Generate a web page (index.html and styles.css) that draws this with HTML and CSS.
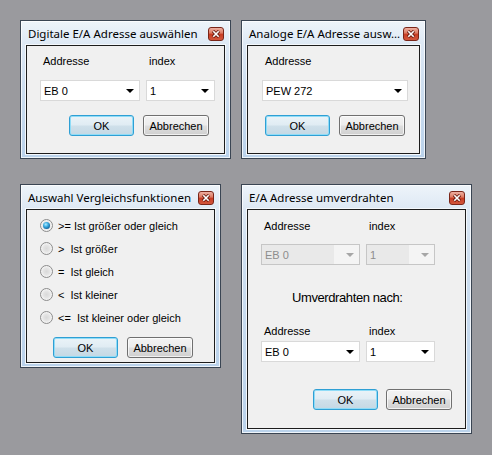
FILE: index.html
```html
<!DOCTYPE html>
<html>
<head>
<meta charset="utf-8">
<link rel="stylesheet" href="styles.css">
</head>
<body>
<div class="desk">

  <div class="win w1">
    <div class="tb"><span class="ttl">Digitale E/A Adresse auswählen</span><span class="x"><svg width="10" height="8" viewBox="0 0 10 8"><path d="M2 1 L8 7 M8 1 L2 7" stroke="#6a1d12" stroke-width="3.2"/><path d="M2.3 1.3 L7.7 6.7 M7.7 1.3 L2.3 6.7" stroke="#fff" stroke-width="1.6"/></svg></span></div>
    <div class="client c1">
      <div class="grid g1">
        <span class="lbl">Addresse</span><span class="lbl">index</span>
        <div class="combo"><span class="val">EB 0</span><span class="arr"></span></div>
        <div class="combo"><span class="val">1</span><span class="arr"></span></div>
      </div>
      <div class="btns b1"><button class="btn def">OK</button><button class="btn">Abbrechen</button></div>
    </div>
  </div>

  <div class="win w2">
    <div class="tb"><span class="ttl">Analoge E/A Adresse ausw...</span><span class="x"><svg width="10" height="8" viewBox="0 0 10 8"><path d="M2 1 L8 7 M8 1 L2 7" stroke="#6a1d12" stroke-width="3.2"/><path d="M2.3 1.3 L7.7 6.7 M7.7 1.3 L2.3 6.7" stroke="#fff" stroke-width="1.6"/></svg></span></div>
    <div class="client c2">
      <div class="grid g2">
        <span class="lbl">Addresse</span>
        <div class="combo"><span class="val">PEW 272</span><span class="arr"></span></div>
      </div>
      <div class="btns b2"><button class="btn def">OK</button><button class="btn">Abbrechen</button></div>
    </div>
  </div>

  <div class="win w3">
    <div class="tb"><span class="ttl">Auswahl Vergleichsfunktionen</span><span class="x"><svg width="10" height="8" viewBox="0 0 10 8"><path d="M2 1 L8 7 M8 1 L2 7" stroke="#6a1d12" stroke-width="3.2"/><path d="M2.3 1.3 L7.7 6.7 M7.7 1.3 L2.3 6.7" stroke="#fff" stroke-width="1.6"/></svg></span></div>
    <div class="client c3">
      <div class="radio"><span class="rb on"></span><span class="rt">&gt;= Ist größer oder gleich</span></div>
      <div class="radio"><span class="rb"></span><span class="rt">&gt;  Ist größer</span></div>
      <div class="radio"><span class="rb"></span><span class="rt">=  Ist gleich</span></div>
      <div class="radio"><span class="rb"></span><span class="rt">&lt;  Ist kleiner</span></div>
      <div class="radio"><span class="rb"></span><span class="rt">&lt;=  Ist kleiner oder gleich</span></div>
      <div class="btns b3"><button class="btn def">OK</button><button class="btn">Abbrechen</button></div>
    </div>
  </div>

  <div class="win w4">
    <div class="tb"><span class="ttl">E/A Adresse umverdrahten</span><span class="x"><svg width="10" height="8" viewBox="0 0 10 8"><path d="M2 1 L8 7 M8 1 L2 7" stroke="#6a1d12" stroke-width="3.2"/><path d="M2.3 1.3 L7.7 6.7 M7.7 1.3 L2.3 6.7" stroke="#fff" stroke-width="1.6"/></svg></span></div>
    <div class="client c4">
      <div class="grid g4 top">
        <span class="lbl">Addresse</span><span class="lbl">index</span>
        <div class="combo dis"><span class="val">EB 0</span><span class="arr"></span></div>
        <div class="combo dis"><span class="val">1</span><span class="arr"></span></div>
      </div>
      <div class="big">Umverdrahten nach:</div>
      <div class="grid g4 bottom">
        <span class="lbl">Addresse</span><span class="lbl">index</span>
        <div class="combo"><span class="val">EB 0</span><span class="arr"></span></div>
        <div class="combo"><span class="val">1</span><span class="arr"></span></div>
      </div>
      <div class="btns b4"><button class="btn def">OK</button><button class="btn">Abbrechen</button></div>
    </div>
  </div>

</div>
</body>
</html>
```

FILE: styles.css
```css
html, body {
  margin: 0;
  padding: 0;
}
body {
  background: #9a9a9e;
  font-family: "Liberation Sans", Arial, sans-serif;
  font-size: 11px;
  color: #000;
}
.desk {
  position: relative;
  width: 492px;
  height: 455px;
  overflow: hidden;
}
.win {
  position: absolute;
  box-sizing: border-box;
  border: 1px solid #3a4553;
  padding: 0 5px 4px 5px;
  display: flex;
  flex-direction: column;
  background: linear-gradient(to bottom, #eef4fa 0px, #dde8f4 24px, #cfdff0 60px, #bad2eb 100%);
  box-shadow: inset 0 0 0 1px rgba(255,255,255,0.75);
}
.w1 { left: 20px; top: 20px; width: 211px; height: 139px; }
.w2 { left: 241px; top: 20px; width: 185px; height: 139px; }
.w3 { left: 20px; top: 184px; width: 201px; height: 184px; }
.w4 { left: 241px; top: 184px; width: 231px; height: 250px; }

.tb {
  height: 24px;
  display: flex;
  align-items: flex-start;
  flex: none;
}
.ttl {
  flex: 1;
  padding-left: 2px;
  line-height: 25px;
  font-family: "Noto Sans", "Open Sans", sans-serif;
  font-size: 11.5px;
  white-space: nowrap;
  overflow: hidden;
  color: #000;
}
.x {
  flex: none;
  margin-top: 6px;
  margin-right: 1px;
  width: 16px;
  height: 14px;
  box-sizing: border-box;
  border: 1px solid #7a2518;
  border-radius: 3px;
  background: linear-gradient(to bottom, #eeb0a2 0%, #dd7a63 42%, #c83d24 52%, #d2563c 100%);
  display: flex;
  align-items: center;
  justify-content: center;
}
.client {
  flex: 1;
  border: 1px solid #1c1c1c;
  background: #f0f0f0;
  box-shadow: 0 0 0 1px #f4f8fc;
}

.grid {
  display: grid;
  column-gap: 6px;
  row-gap: 12px;
}
.lbl {
  padding-left: 3px;
  line-height: 13px;
  white-space: nowrap;
}
.combo {
  height: 21px;
  box-sizing: border-box;
  border: 1px solid #d9d9d9;
  background: #fff;
  display: flex;
  align-items: center;
  justify-content: space-between;
}
.val {
  padding-left: 3px;
  white-space: nowrap;
}
.arr {
  width: 0;
  height: 0;
  border-left: 4px solid transparent;
  border-right: 4px solid transparent;
  border-top: 4px solid #000;
  margin-right: 5px;
}
.combo.dis {
  border-color: #c6c6c6;
  background: linear-gradient(to right, #e9e9e9 0, #e9e9e9 calc(100% - 25px), #f4f4f4 calc(100% - 25px));
  color: #8d8d8d;
}
.combo.dis .arr {
  border-top-color: #a6a6a6;
}

.btns {
  display: flex;
  gap: 9px;
}
.btn {
  height: 21px;
  box-sizing: border-box;
  padding: 0;
  border: 1px solid #707070;
  border-radius: 3px;
  background: linear-gradient(to bottom, #f3f3f3 0%, #ececec 48%, #dedede 52%, #d0d0d0 100%);
  box-shadow: inset 0 0 0 1px rgba(255,255,255,0.7);
  font-family: "Liberation Sans", Arial, sans-serif;
  font-size: 11px;
  color: #000;
  width: 66px;
}
.btn.def {
  width: 65px;
  border-color: #2f9fd4;
  background: linear-gradient(to bottom, #eaf3f8 0%, #e0ecf3 48%, #cfe0ea 52%, #c4d8e4 100%);
  box-shadow: inset 0 0 0 1px #8fdcf7;
}

/* window 1 */
.c1 { padding: 9px 0 0 13px; }
.g1 { grid-template-columns: 100px 69px; }
.b1 { margin-top: 14px; padding-left: 29px; }

/* window 2 */
.c2 { padding: 9px 0 0 14px; }
.g2 { grid-template-columns: 146px; }
.b2 { margin-top: 14px; padding-left: 3px; }

/* window 3 */
.c3 { padding: 4px 0 0 13px; }
.radio {
  height: 23px;
  display: flex;
  align-items: center;
}
.rb {
  width: 13px;
  height: 13px;
  box-sizing: border-box;
  border-radius: 50%;
  border: 1px solid #8c8c8c;
  background: radial-gradient(circle at 50% 50%, #d9d9d9 0, #e4e4e4 40%, #f7f7f7 75%, #fdfdfd 100%);
  margin-right: 5px;
  display: flex;
  align-items: center;
  justify-content: center;
}
.rb.on::after {
  content: "";
  width: 7px;
  height: 7px;
  border-radius: 50%;
  background: radial-gradient(circle at 40% 35%, #b4ecff 0, #40b0e4 35%, #11649e 75%, #0c4f82 100%);
}
.rt {
  white-space: pre;
}
.b3 { margin-top: 8px; padding-left: 13px; }

/* window 4 */
.c4 { padding: 10px 0 0 13px; }
.g4 { grid-template-columns: 99px 69px; }
.g4.top { row-gap: 11px; }
.g4.bottom { row-gap: 3px; margin-top: 19px; }
.big {
  margin-top: 25px;
  padding-left: 31px;
  font-size: 13px;
  line-height: 16px;
  letter-spacing: -0.4px;
}
.b4 { margin-top: 27px; padding-left: 52px; gap: 8px; }
```
